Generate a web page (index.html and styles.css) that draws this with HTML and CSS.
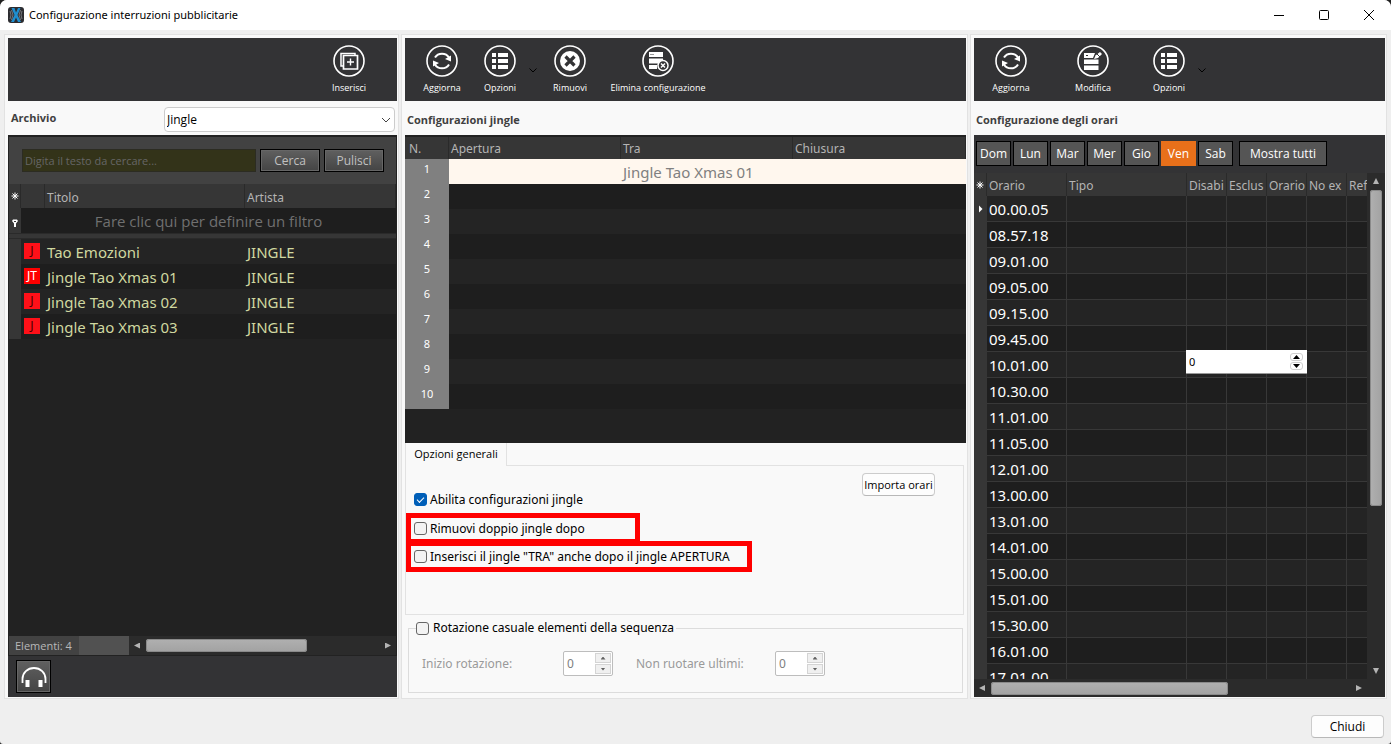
FILE: index.html
```html
<!DOCTYPE html>
<html lang="it">
<head>
<meta charset="utf-8">
<title>Configurazione interruzioni pubblicitarie</title>
<link rel="stylesheet" href="styles.css">
</head>
<body>
<svg class="defs" aria-hidden="true">
  <symbol id="i-insert" viewBox="0 0 32 32"><circle cx="16" cy="16" r="15" fill="none" stroke="#fff" stroke-width="1.6"/><path d="M22 10V8.500H8V21h2" fill="none" stroke="#fff" stroke-width="1.5"/><path d="M10.500 10.500h14v13.500h-14z" fill="none" stroke="#fff" stroke-width="1.700"/><path d="M17.500 13.500v7M14 17h7" stroke="#fff" stroke-width="1.400"/></symbol>
  <symbol id="i-refresh" viewBox="0 0 32 32"><circle cx="16" cy="16" r="15" fill="none" stroke="#fff" stroke-width="1.600"/><path d="M9 12.500a8 7.500 0 0 1 14 0M23 19.500a8 7.500 0 0 1-14 0" fill="none" stroke="#fff" stroke-width="2"/><path d="M25 10.500v6l-6-2.500zM7 21.500v-6l6 2.500z" fill="#fff"/></symbol>
  <symbol id="i-list" viewBox="0 0 32 32"><circle cx="16" cy="16" r="15" fill="none" stroke="#fff" stroke-width="1.600"/><path d="M8 8h4v4H8zM14 8h10v4H14zM8 14h4v4H8zM14 14h10v4H14zM8 20h4v4H8zM14 20h10v4H14z" fill="#fff"/></symbol>
  <symbol id="i-remove" viewBox="0 0 32 32"><circle cx="16" cy="16" r="15" fill="none" stroke="#fff" stroke-width="1.600"/><circle cx="16" cy="16" r="10" fill="#fff"/><path d="M11.500 11.500l9 9M20.500 11.500l-9 9" stroke="#333335" stroke-width="3.200"/></symbol>
  <symbol id="i-delete" viewBox="0 0 32 32"><circle cx="16" cy="16" r="15" fill="none" stroke="#fff" stroke-width="1.600"/><path d="M7 7h14v5H7zM7 13.500h14V15l-4 3.500H7zM7 20h8v4H7z" fill="#fff"/><path d="M8.500 9.500h1M10.500 9.500h1" stroke="#333335"/><circle cx="21" cy="20.500" r="5" fill="#333335" stroke="#fff" stroke-width="1.500"/><path d="M19 18.500l4 4M23 18.500l-4 4" stroke="#fff" stroke-width="1.500"/></symbol>
  <symbol id="i-edit" viewBox="0 0 32 32"><circle cx="16" cy="16" r="15" fill="none" stroke="#fff" stroke-width="1.600"/><path d="M7 8h11l-2 5H7zM7 14.500h14.500V19H7zM7 20.500h14.500V25H7z" fill="#fff"/><path d="M9 10.500h2" stroke="#333335"/><path d="M17 14l1.500-3.500 4.500-3.500 2 2-4 4z" fill="#fff"/><path d="M20 9l3 3" stroke="#333335"/></symbol>
  <symbol id="i-star" viewBox="0 0 8 8"><path d="M4 .500v7M.500 4h7M1.500 1.500l5 5M6.500 1.500l-5 5" stroke="#fff" stroke-width="1"/></symbol>
</svg>
<div class="window">
  <header class="titlebar">
    <svg class="app-icon" viewBox="0 0 16 16"><rect width="16" height="16" rx="3" fill="#2c2c30"/><path d="M2 4q2 4 0 8M14 4q-2 4 0 8M3.500 3q3 5 0 10M12.500 3q-3 5 0 10" fill="none" stroke="#74777c"/><path d="M3.500 1h3L8 5.500 10 1h2.500L9.500 8l3.500 7h-3L8 10.500 6 15H3l3.500-7z" fill="#1f8fd0"/></svg>
    <h1 class="title">Configurazione interruzioni pubblicitarie</h1>
    <button class="win-btn" aria-label="Riduci a icona"><svg viewBox="0 0 12 12"><path d="M1 6.500h10" stroke="#000"/></svg></button>
    <button class="win-btn" aria-label="Ingrandisci"><svg viewBox="0 0 12 12"><rect x="1.500" y="1.500" width="9" height="9" rx="1" fill="none" stroke="#000"/></svg></button>
    <button class="win-btn" aria-label="Chiudi finestra"><svg viewBox="0 0 12 12"><path d="M1 1l10 10M11 1L1 11" stroke="#000"/></svg></button>
  </header>

  <main class="panels">
    <section class="panel">
      <div class="toolbar toolbar-end">
        <button class="tool"><svg><use href="#i-insert"/></svg>Inserisci</button>
      </div>
      <div class="archive">
        <label class="heading" for="archive">Archivio</label>
        <div class="select-wrap">
          <select id="archive"><option>Jingle</option></select>
          <svg viewBox="0 0 10 6"><path d="M1 1l4 4 4-4" fill="none" stroke="#444"/></svg>
        </div>
      </div>
      <div class="grid">
        <div class="search">
          <input type="text" placeholder="Digita il testo da cercare..." aria-label="Digita il testo da cercare">
          <button class="dark-btn">Cerca</button>
          <button class="dark-btn">Pulisci</button>
        </div>
        <table class="songs">
          <colgroup><col class="c-ind"><col class="c-icon"><col class="c-title"><col></colgroup>
          <thead>
            <tr><th><svg class="mark"><use href="#i-star"/></svg></th><th></th><th>Titolo</th><th>Artista</th></tr>
            <tr class="filter"><td class="ind"><svg class="mark" viewBox="0 0 8 8"><path d="M2 .500h4l1 1.500-2 2.500V8H3V4.500L1 2z" fill="#fff"/><path d="M3 2.500h2" stroke="#363636"/></svg></td><td colspan="3">Fare clic qui per definire un filtro</td></tr>
            <tr class="divider"><td class="ind"></td><td colspan="3"></td></tr>
          </thead>
          <tbody>
            <tr><td class="ind"></td><td><span class="badge">J</span></td><td>Tao Emozioni</td><td>JINGLE</td></tr>
            <tr><td class="ind"></td><td><span class="badge badge-on">JT</span></td><td>Jingle Tao Xmas 01</td><td>JINGLE</td></tr>
            <tr><td class="ind"></td><td><span class="badge">J</span></td><td>Jingle Tao Xmas 02</td><td>JINGLE</td></tr>
            <tr><td class="ind"></td><td><span class="badge">J</span></td><td>Jingle Tao Xmas 03</td><td>JINGLE</td></tr>
          </tbody>
        </table>
        <div class="status">
          <span class="count">Elementi: 4</span><span class="count-pad"></span>
          <div class="hscroll"><i class="arr left"></i><div class="track"><div class="thumb" style="width:69%"></div></div><i class="arr right"></i></div>
        </div>
      </div>
      <div class="player">
        <button class="dark-btn phones" aria-label="Preascolto"><svg viewBox="0 0 26 22"><path d="M1.500 17v-4a11.500 11 0 0 1 23 0v4" fill="none" stroke="#fff" stroke-width="1.800"/><path d="M4.500 14h4v7h-4zM17.500 14h4v7h-4z" fill="#fff"/></svg></button>
      </div>
    </section>

    <section class="panel">
      <div class="toolbar">
        <button class="tool"><svg><use href="#i-refresh"/></svg>Aggiorna</button>
        <button class="tool"><svg><use href="#i-list"/></svg>Opzioni</button>
        <button class="more" aria-label="Altre opzioni"><svg viewBox="0 0 8 5"><path d="M.500 .500L4 4 7.500 .500" fill="none" stroke="#000"/></svg></button>
        <button class="tool"><svg><use href="#i-remove"/></svg>Rimuovi</button>
        <button class="tool tool-wide"><svg><use href="#i-delete"/></svg>Elimina configurazione</button>
      </div>
      <h2 class="heading caption">Configurazioni jingle</h2>
      <div class="grid grid-jingle">
        <table class="jingles">
          <colgroup><col class="c-num"><col class="c-open"><col class="c-between"><col></colgroup>
          <thead><tr><th>N.</th><th>Apertura</th><th>Tra</th><th>Chiusura</th></tr></thead>
          <tbody>
            <tr class="current"><td class="num">1</td><td></td><td>Jingle Tao Xmas 01</td><td></td></tr>
            <tr><td class="num">2</td><td></td><td></td><td></td></tr>
            <tr><td class="num">3</td><td></td><td></td><td></td></tr>
            <tr><td class="num">4</td><td></td><td></td><td></td></tr>
            <tr><td class="num">5</td><td></td><td></td><td></td></tr>
            <tr><td class="num">6</td><td></td><td></td><td></td></tr>
            <tr><td class="num">7</td><td></td><td></td><td></td></tr>
            <tr><td class="num">8</td><td></td><td></td><td></td></tr>
            <tr><td class="num">9</td><td></td><td></td><td></td></tr>
            <tr><td class="num">10</td><td></td><td></td><td></td></tr>
          </tbody>
        </table>
      </div>
      <div class="tabs"><button class="tab">Opzioni generali</button><span class="tab-rest"></span></div>
      <div class="tab-page">
        <div class="checks">
          <label class="check"><input type="checkbox" checked>Abilita configurazioni jingle</label>
          <label class="check marked marked-short"><input type="checkbox">Rimuovi doppio jingle dopo</label>
          <label class="check marked marked-long"><input type="checkbox">Inserisci il jingle "TRA" anche dopo il jingle APERTURA</label>
        </div>
        <button class="light-btn import">Importa orari</button>
      </div>
      <fieldset class="rotation">
        <legend><label class="check"><input type="checkbox">Rotazione casuale elementi della sequenza</label></legend>
        <div class="rotation-row">
          <label for="start">Inizio rotazione:</label>
          <div class="spin spin-first"><input id="start" type="text" value="0" disabled><span><button disabled aria-label="Aumenta"><i class="tri up"></i></button><button disabled aria-label="Diminuisci"><i class="tri down"></i></button></span></div>
          <label for="last">Non ruotare ultimi:</label>
          <div class="spin"><input id="last" type="text" value="0" disabled><span><button disabled aria-label="Aumenta"><i class="tri up"></i></button><button disabled aria-label="Diminuisci"><i class="tri down"></i></button></span></div>
        </div>
      </fieldset>
    </section>

    <section class="panel">
      <div class="toolbar">
        <button class="tool"><svg><use href="#i-refresh"/></svg>Aggiorna</button>
        <button class="tool tool-apart"><svg><use href="#i-edit"/></svg>Modifica</button>
        <button class="tool"><svg><use href="#i-list"/></svg>Opzioni</button>
        <button class="more" aria-label="Altre opzioni"><svg viewBox="0 0 8 5"><path d="M.500 .500L4 4 7.500 .500" fill="none" stroke="#000"/></svg></button>
      </div>
      <h2 class="heading caption">Configurazione degli orari</h2>
      <div class="days">
        <button>Dom</button><button>Lun</button><button>Mar</button><button>Mer</button><button>Gio</button><button class="on">Ven</button><button>Sab</button><button class="all">Mostra tutti</button>
      </div>
      <div class="schedule">
        <div class="times-view">
          <table class="times">
            <colgroup><col class="c-mark"><col class="c-time"><col class="c-type"><col class="c-flag"><col class="c-flag"><col class="c-flag"><col class="c-flag"><col></colgroup>
            <thead><tr><th><svg class="mark"><use href="#i-star"/></svg></th><th>Orario</th><th>Tipo</th><th>Disabi</th><th>Esclus</th><th>Orario</th><th>No ex</th><th>Ref</th></tr></thead>
            <tbody>
              <tr><td class="ind"><i class="row-arrow"></i></td><td>00.00.05</td><td></td><td></td><td></td><td></td><td></td><td></td></tr>
              <tr><td class="ind"></td><td>08.57.18</td><td></td><td></td><td></td><td></td><td></td><td></td></tr>
              <tr><td class="ind"></td><td>09.01.00</td><td></td><td></td><td></td><td></td><td></td><td></td></tr>
              <tr><td class="ind"></td><td>09.05.00</td><td></td><td></td><td></td><td></td><td></td><td></td></tr>
              <tr><td class="ind"></td><td>09.15.00</td><td></td><td></td><td></td><td></td><td></td><td></td></tr>
              <tr><td class="ind"></td><td>09.45.00</td><td></td><td></td><td></td><td></td><td></td><td></td></tr>
              <tr><td class="ind"></td><td>10.01.00</td><td></td><td class="editing"><div class="editor"><input type="text" value="0" aria-label="Valore"><span><button aria-label="Aumenta"><i class="tri up"></i></button><button aria-label="Diminuisci"><i class="tri down"></i></button></span></div></td><td></td><td></td><td></td><td></td></tr>
              <tr><td class="ind"></td><td>10.30.00</td><td></td><td></td><td></td><td></td><td></td><td></td></tr>
              <tr><td class="ind"></td><td>11.01.00</td><td></td><td></td><td></td><td></td><td></td><td></td></tr>
              <tr><td class="ind"></td><td>11.05.00</td><td></td><td></td><td></td><td></td><td></td><td></td></tr>
              <tr><td class="ind"></td><td>12.01.00</td><td></td><td></td><td></td><td></td><td></td><td></td></tr>
              <tr><td class="ind"></td><td>13.00.00</td><td></td><td></td><td></td><td></td><td></td><td></td></tr>
              <tr><td class="ind"></td><td>13.01.00</td><td></td><td></td><td></td><td></td><td></td><td></td></tr>
              <tr><td class="ind"></td><td>14.01.00</td><td></td><td></td><td></td><td></td><td></td><td></td></tr>
              <tr><td class="ind"></td><td>15.00.00</td><td></td><td></td><td></td><td></td><td></td><td></td></tr>
              <tr><td class="ind"></td><td>15.01.00</td><td></td><td></td><td></td><td></td><td></td><td></td></tr>
              <tr><td class="ind"></td><td>15.30.00</td><td></td><td></td><td></td><td></td><td></td><td></td></tr>
              <tr><td class="ind"></td><td>16.01.00</td><td></td><td></td><td></td><td></td><td></td><td></td></tr>
              <tr><td class="ind"></td><td>17.01.00</td><td></td><td></td><td></td><td></td><td></td><td></td></tr>
            </tbody>
          </table>
        </div>
        <div class="vscroll"><i class="arr up"></i><div class="track"><div class="thumb" style="height:67%"></div></div><i class="arr down"></i></div>
        <div class="hscroll"><i class="arr left"></i><div class="track"><div class="thumb" style="width:66%"></div></div><i class="arr right"></i></div>
        <div class="corner"></div>
      </div>
    </section>
  </main>

  <footer class="actions"><button class="light-btn close">Chiudi</button></footer>
</div>
</body>
</html>
```

FILE: styles.css
```css
:root {
  --bar: #333335;
  --head: #363636;
  --dark: #222222;
  --row-a: #242424;
  --row-b: #1e1e1e;
  --face: #f9f9f9;
  --line: #e2e2e2;
  --wide: "Noto Sans", "Open Sans", sans-serif;
}

* { box-sizing: border-box; }

body {
  margin: 0;
  background: #202020;
  color: #000;
  font: 12px/16px "Open Sans", "Noto Sans", sans-serif;
}

button, input, select {
  margin: 0;
  padding: 0;
  border: 0;
  background: none;
  color: inherit;
  font: inherit;
}

h1, h2 { margin: 0; font-size: 12px; }
.defs { display: none; }

.window {
  display: flex;
  flex-direction: column;
  height: 100vh;
  overflow: hidden;
  border-radius: 7px 7px 3px 3px;
  background: #efefef;
}

/* Title bar */
.titlebar {
  display: flex;
  align-items: center;
  height: 30px;
  padding-left: 8px;
  background: #fff;
}
.app-icon { width: 16px; height: 16px; margin-right: 5px; }
.title { flex: 1; font-family: var(--wide); font-size: 11px; font-weight: 400; }
.win-btn { display: flex; align-items: center; justify-content: center; width: 45px; height: 30px; }
.win-btn svg { width: 12px; height: 12px; }

/* Panels */
.panels {
  flex: 1;
  min-height: 0;
  display: grid;
  grid-template-columns: 395fr 567fr 417fr;
  gap: 2px;
  padding: 4px 4px 0;
}
.panel {
  display: flex;
  flex-direction: column;
  min-width: 0;
  min-height: 0;
  padding: 3px 1px 1px 3px;
  border: 1px solid var(--line);
  background: var(--face);
}

.toolbar {
  display: flex;
  flex: none;
  height: 63px;
  padding: 7px 19px 0 8px;
  background: var(--bar);
}
.toolbar-end { justify-content: flex-end; }
.tool {
  display: flex;
  flex-direction: column;
  align-items: center;
  gap: 3px;
  width: 58px;
  height: 50px;
  color: #fff;
  font-size: 9px;
  line-height: 16px;
  white-space: nowrap;
}
.tool svg { flex: none; width: 32px; height: 32px; }
.tool-wide { width: 118px; }
.tool-apart { margin: 0 18px 0 24px; }
.more { width: 8px; height: 50px; margin-right: 4px; }
.more svg { display: block; width: 8px; height: 5px; }

.heading { color: #404040; font-size: 11px; font-weight: 700; }
.caption { flex: none; height: 34px; padding: 11px 2px 0; }

.archive { display: flex; flex: none; justify-content: space-between; height: 34px; padding: 6px 2px 2px 3px; }
.archive .heading { padding-top: 3px; }
.select-wrap { position: relative; width: 231px; }
.select-wrap select {
  width: 100%;
  height: 25px;
  padding-left: 2px;
  appearance: none;
  border: 1px solid #ccc;
  border-radius: 4px;
  background: #fff;
}
.select-wrap svg { position: absolute; right: 4px; top: 10px; width: 10px; height: 6px; }

/* Grids */
.grid {
  display: flex;
  flex: 1;
  flex-direction: column;
  min-height: 0;
  padding: 2px 1px 1px 1px;
  background: var(--dark);
}
table { width: 100%; table-layout: fixed; border-spacing: 0; }
th, td { padding: 0 2px; overflow: hidden; text-align: left; white-space: nowrap; }
th {
  height: 23px;
  padding-top: 2px;
  border-right: 1px solid #2a2a2a;
  background: var(--head);
  color: #b4b4b4;
  font-family: var(--wide);
  font-size: 12px;
  font-weight: 400;
}
th:first-child, .ind { padding: 0; background: var(--head); text-align: center; }
.mark { width: 8px; height: 8px; }
tbody td { font-family: var(--wide); font-size: 15px; line-height: 20px; }
tbody tr:nth-child(odd) td { background: var(--row-a); }
tbody tr:nth-child(even) td { background: var(--row-b); }
tbody tr td.ind { background: var(--head); }

.search { display: flex; flex: none; gap: 4px; padding: 12px 12px 12px 13px; background: #424242; }
.search input {
  flex: 1;
  min-width: 0;
  height: 23px;
  padding-left: 2px;
  border: 1px solid #2c2c22;
  background: #333319;
  font-size: 11px;
}
.search input::placeholder { color: #666; opacity: 1; }
.dark-btn {
  width: 60px;
  height: 23px;
  border: 1px solid #000;
  background: linear-gradient(#606060, #444);
  box-shadow: inset 0 0 0 1px #666;
  color: #c0c0c0;
}

.songs { color: #d0d8a0; }
.c-ind { width: 12px; }
.c-icon { width: 24px; }
.c-title { width: 200px; }
.songs th { height: 24px; }
.songs th + th { padding-top: 3px; }
.filter td { height: 25px; background: var(--row-b); color: #707070; font-size: 15px; text-align: center; }
.filter td.ind, .divider td { background: var(--head); }
.divider td { height: 6px; border-top: 1px solid #2a2a2a; border-bottom: 1px solid #2a2a2a; }
.songs tbody td { height: 25px; }
.badge {
  display: block;
  width: 16px;
  height: 16px;
  margin: 0 0 1px 1px;
  background: #ff1018;
  color: #400;
  font-size: 12px;
  line-height: 16px;
  text-align: center;
}
.badge-on { background: #f00; color: #fff; }

.status { display: flex; height: 19px; margin-top: auto; background: #2b2b2b; }
.count { width: 70px; padding-left: 6px; background: #424242; color: #b8b8b8; font-size: 11px; line-height: 19px; }
.count-pad { width: 50px; background: #515151; }
.player { flex: none; height: 41px; padding: 4px 8px; background: var(--bar); }
.phones { width: 35px; height: 33px; }
.phones svg { display: block; width: 26px; height: 22px; margin: auto; }

/* Scroll bars */
.hscroll, .vscroll { display: flex; flex: 1; align-items: center; gap: 6px; background: #2b2b2b; }
.hscroll { padding: 0 5px; }
.vscroll { flex-direction: column; padding: 5px 0; }
.track { flex: 1; }
.hscroll .track { height: 13px; }
.vscroll .track { width: 12px; }
.thumb { height: 100%; border-radius: 3px; background: linear-gradient(#b0b0b0, #a2a2a2); box-shadow: inset 0 0 0 1px #8a8a8a; }
.vscroll .thumb { background: linear-gradient(90deg, #b0b0b0, #a2a2a2); }
.arr { width: 6px; height: 6px; background: #b4b4b4; }
.arr.left { clip-path: polygon(100% 0, 100% 100%, 0 50%); }
.arr.right { clip-path: polygon(0 0, 0 100%, 100% 50%); }
.arr.up { clip-path: polygon(0 100%, 100% 100%, 50% 0); }
.arr.down { clip-path: polygon(0 0, 100% 0, 50% 100%); }

/* Jingle table */
.grid-jingle { padding: 2px 0 0; }
.c-num { width: 44px; }
.c-open { width: 172px; }
.c-between { width: 172px; }
.jingles th { height: 22px; }
.jingles th:first-child { padding: 2px 0 0 4px; text-align: left; }
.jingles tbody td { height: 25px; }
.jingles tbody tr td.num {
  padding: 0 0 5px;
  background: #808080;
  color: #fff;
  font-size: 11px;
  text-align: center;
}
.jingles tbody tr.current td { color: #808080; }
.jingles tbody tr.current td:not(.num) { background: #fff7ee; }
.jingles tbody tr.current td.num { color: #fff; }

/* Options */
.tabs { display: flex; flex: none; height: 23px; }
.tab { width: 102px; padding-bottom: 2px; border: solid var(--line); border-width: 0 1px; font-size: 11px; }
.tab-rest { flex: 1; margin-right: 2px; border-bottom: 1px solid var(--line); }
.tab-page {
  display: flex;
  flex: none;
  justify-content: space-between;
  height: 149px;
  margin-right: 2px;
  padding: 7px 28px 0 0;
  border: 1px solid var(--line);
  border-top: 0;
}
.checks { display: flex; flex-direction: column; align-items: flex-start; padding-top: 16px; }
.check { display: flex; align-items: center; gap: 3px; font-family: var(--wide); white-space: nowrap; }
.check input {
  width: 13px;
  height: 13px;
  appearance: none;
  border: 1px solid #666;
  border-radius: 3px;
  background: #f3f3f3;
}
.check input:checked { border-color: #005fb8; background: #005fb8; }
.check input:checked::after {
  content: "";
  display: block;
  width: 6px;
  height: 3px;
  margin: 3px 0 0 2px;
  border: solid #fff;
  border-width: 0 0 1px 1px;
  transform: rotate(-45deg);
}
.checks .check { height: 21px; margin: 0 0 8px 8px; }
.checks .marked { height: 31px; margin: -5px 0 0; padding: 0 4px 0 3px; border: 5px solid #f00; }
.checks .marked + .marked { margin-top: -3px; }
.marked-short { width: 234px; }
.marked-long { width: 346px; }
.light-btn {
  height: 23px;
  border: 1px solid #ccc;
  border-bottom-color: #b8b8b8;
  border-radius: 4px;
  background: #fdfdfd;
}
.import { width: 73px; font-size: 11px; }

.rotation {
  flex: none;
  height: 73px;
  min-width: 0;
  margin: 5px 3px 4px 3px;
  padding: 0 0 0 13px;
  border: 1px solid #dcdcdc;
  color: #9a9a9a;
  font-family: var(--wide);
}
.rotation legend { margin-left: -6px; padding: 0 2px 0 0; color: #000; }
.rotation .check { gap: 4px; }
.rotation-row { display: flex; align-items: center; padding-top: 15px; }
.rotation-row > label { width: 141px; white-space: nowrap; }
.rotation-row .spin + label { width: 139px; }
.spin { display: flex; width: 50px; height: 25px; padding: 1px; border: 1px solid #bdbdbd; border-radius: 2px; background: #fff; }
.spin-first { margin-right: 23px; }
.spin input { flex: 1; min-width: 0; padding-left: 2px; color: #808080; }
.spin span { display: grid; gap: 1px; width: 16px; }
.spin button { display: grid; place-items: center; border: 1px solid #d4d4d4; background: #f0f0f0; color: #606060; }
.tri { width: 5px; height: 3px; background: currentColor; }
.tri.up { clip-path: polygon(0 100%, 100% 100%, 50% 0); }
.tri.down { clip-path: polygon(0 0, 100% 0, 50% 100%); }

/* Schedule */
.days { display: flex; flex: none; gap: 2px; height: 38px; padding: 6px 2px 7px; background: var(--bar); color: #fff; }
.days button { width: 35px; border: 1px solid #000; background: #555; }
.days .on { border-color: #e8701a; background: #e8701a; }
.days .all { width: 88px; margin-left: 4px; }
.schedule {
  flex: 1;
  min-height: 0;
  display: grid;
  grid-template: minmax(0, 1fr) 18px / minmax(0, 1fr) 18px;
}
.times-view { overflow: hidden; }
.times { color: #fff; }
.times th:last-child, .times tbody td:last-child { padding-right: 0; border-right: 0; }
.times th { padding-right: 0; }
.times tbody td { height: 26px; border-right: 1px solid #383838; border-bottom: 1px solid #383838; }
.times tbody td.ind { padding: 0; border: 0; }
.c-mark { width: 13px; }
.c-time { width: 80px; }
.c-type { width: 120px; }
.c-flag { width: 40px; }
.row-arrow { display: block; width: 4px; height: 8px; margin: 0 auto; background: #fff; clip-path: polygon(0 0, 100% 50%, 0 100%); }
.corner { background: #2b2b2b; }
.times td.editing { position: relative; overflow: visible; }
.editor {
  position: absolute;
  left: -1px;
  top: -2px;
  display: flex;
  align-items: center;
  width: 121px;
  height: 24px;
  padding: 0 4px 0 3px;
  border-bottom: 1px solid #999;
  background: #fff;
  color: #000;
  font-size: 11px;
}
.editor input { flex: 1; min-width: 0; }
.editor span { display: grid; gap: 1px; }
.editor button { display: grid; place-items: center; width: 13px; height: 8px; border: 1px solid #d0d0d0; border-radius: 3px; }
.editor .tri { width: 7px; height: 4px; }

/* Footer */
.actions { display: flex; flex: none; justify-content: flex-end; height: 45px; padding: 16px 7px 0; }
.close { width: 73px; }
```
